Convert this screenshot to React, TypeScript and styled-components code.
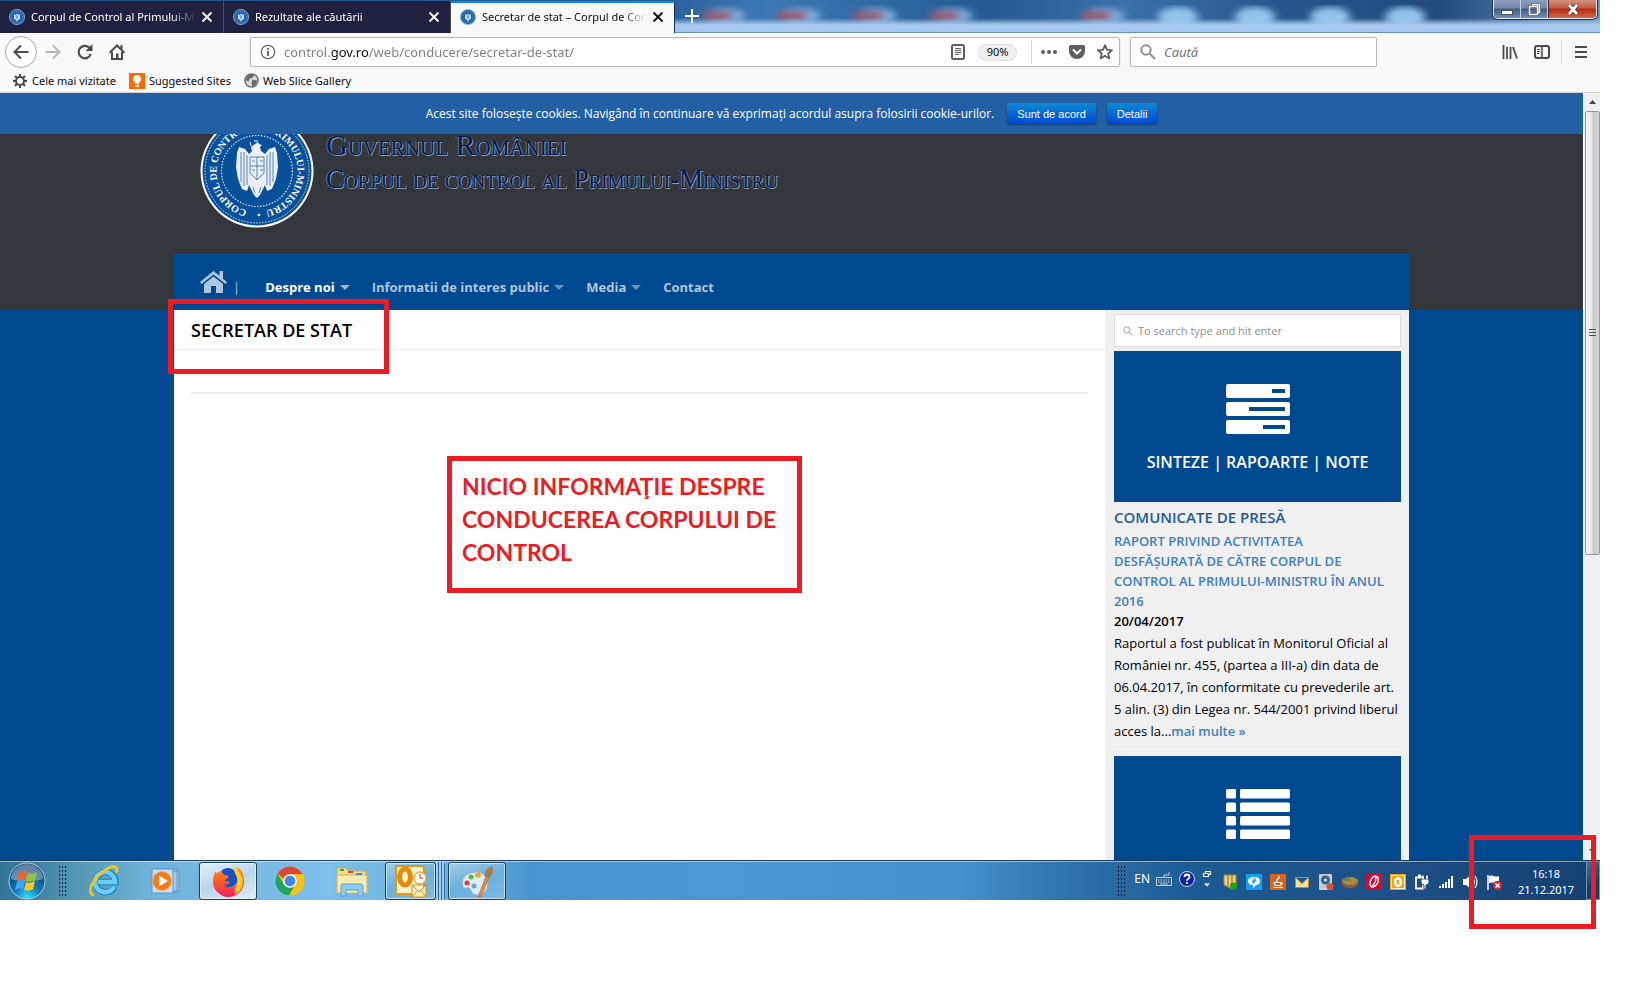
import React from "react";
import styled, { createGlobalStyle, css } from "styled-components";

const ui = `"Noto Sans", "Open Sans", sans-serif`;
const site = `"Open Sans", "Noto Sans", sans-serif`;
const navy = "#004990";
const red = "#ed1c24";

const GlobalStyle = createGlobalStyle`
  *, *::before, *::after { box-sizing: border-box; }
  body { margin: 0; background: #fff; font-family: ${site}; color: #000; }
  h1, h2, h3, p, ul { margin: 0; padding: 0; font-weight: inherit; }
  button, input { font: inherit; }
  svg { display: block; flex: none; }
`;

const Canvas = styled.div`
  height: 100vh;
  padding: 0 40px 108px 0;
`;

const Screen = styled.div`
  display: flex;
  flex-direction: column;
  height: 100%;
  min-width: 0;
`;

const PlainButton = styled.button`
  display: flex;
  align-items: center;
  justify-content: center;
  flex: none;
  padding: 0;
  border: 0;
  background: none;
  color: inherit;
`;

/* ---------- title bar ---------- */

const TitleBar = styled.header`
  position: relative;
  display: flex;
  align-items: flex-start;
  flex: none;
  height: 33px;
  overflow: hidden;
  background: #2c5f98;
`;

const Glass = styled.svg`
  position: absolute;
  inset: 0;
  width: 100%;
  height: 33px;
`;

const TabList = styled.div`
  position: relative;
  display: flex;
  height: 33px;
  padding-top: 1px;
`;

const Tab = styled.div<{ $active?: boolean; $wide?: boolean }>`
  display: flex;
  align-items: center;
  width: ${(p) => (p.$wide ? 227 : 224)}px;
  padding: 0 10px 0 9px;
  gap: 6px;
  font: 11px/16px ${ui};
  color: #fff;
  background: #20203f;
  border-right: 1px solid #4b4b68;
  ${(p) =>
    p.$active &&
    css`
      color: #0c0c0d;
      background: #f9f9fa;
      border-top: 2px solid #0a84ff;
      border-right: 1px solid #10305a;
      padding-bottom: 2px;
    `}
`;

const TabLabel = styled.span`
  flex: 1;
  min-width: 0;
  overflow: hidden;
  white-space: nowrap;
  mask-image: linear-gradient(to right, #000 calc(100% - 24px), transparent);
`;

const NewTab = styled(PlainButton)`
  position: relative;
  width: 34px;
  height: 32px;
  color: #fff;
`;

const WindowButtons = styled.div`
  position: relative;
  display: flex;
  margin: 0 3px 0 auto;
  height: 19px;
  border: 1px solid #e3ebf5;
  border-top: 0;
  border-radius: 0 0 5px 5px;
  overflow: hidden;
  box-shadow: 0 0 0 1px #20354f;
`;

const WindowButton = styled(PlainButton)<{ $close?: boolean }>`
  width: ${(p) => (p.$close ? 48 : 27)}px;
  border-left: ${(p) => (p.$close ? "1px solid #50181a" : "0")};
  border-right: ${(p) => (p.$close ? "0" : "1px solid #c6d3e4")};
  background: ${(p) =>
    p.$close
      ? "linear-gradient(#d4917f 0, #c25b47 45%, #b02a12 50%, #d26a4c 100%)"
      : "linear-gradient(#8c9fbb 0, #7288aa 45%, #3e5c85 50%, #7391b6 100%)"};
`;

/* ---------- browser toolbars ---------- */

const NavBar = styled.nav`
  display: flex;
  align-items: center;
  flex: none;
  height: 38px;
  padding: 0 3px 0 5px;
  background: #f9f9fa;
  color: #4a4a4f;
`;

const ToolButton = styled(PlainButton)<{ $round?: boolean }>`
  width: 32px;
  height: 32px;
  ${(p) =>
    p.$round &&
    css`
      border: 1px solid #a9a9ab;
      border-radius: 50%;
      background: #fff;
    `}
`;

const Field = styled.label<{ $search?: boolean }>`
  display: flex;
  align-items: center;
  flex: ${(p) => (p.$search ? "0 1 247px" : "1 1 0")};
  min-width: 0;
  height: 30px;
  margin-left: ${(p) => (p.$search ? 10 : 117)}px;
  padding: 0 0 0 9px;
  gap: 8px;
  border: 1px solid #b8b8ba;
  border-radius: 2px;
  background: #fff;
  box-shadow: 0 1px 3px rgba(0, 0, 0, 0.06);
`;

const Entry = styled.input<{ $url?: boolean }>`
  flex: 1;
  min-width: 0;
  padding: 0;
  border: 0;
  outline: 0;
  background: none;
  font: 13px/20px ${ui};
  &::placeholder {
    color: #757577;
    font-style: italic;
    opacity: 1;
  }
  ${(p) =>
    p.$url &&
    css`
      color: transparent;
      background: linear-gradient(to right, #7d7d80 0 46px, #0c0c0d 46px 84px, #7d7d80 84px);
      background-clip: text;
      -webkit-background-clip: text;
    `}
`;

const FieldTools = styled.div`
  display: flex;
  align-items: center;
  color: #5e5e62;
`;

const FieldButton = styled(PlainButton)`
  width: 28px;
  height: 28px;
`;

const Zoom = styled(PlainButton)`
  width: 39px;
  height: 17px;
  margin: 0 11px 0 6px;
  border: 1px solid #dededf;
  border-radius: 9px;
  background: #f0f0f1;
  font: 11px/14px ${ui};
  color: #0c0c0d;
`;

const Divider = styled.span`
  width: 1px;
  height: 24px;
  margin: 0 3px;
  background: #d7d7db;
`;

const NavEnd = styled.div`
  display: flex;
  align-items: center;
  margin-left: 117px;
`;

const Bookmarks = styled.div`
  display: flex;
  align-items: center;
  flex: none;
  height: 22px;
  padding: 0 12px 2px;
  gap: 13px;
  border-bottom: 1px solid #d5d5d8;
  background: #f9f9fa;
`;

const Bookmark = styled.a`
  display: flex;
  align-items: center;
  gap: 4px;
  font: 11px/16px ${ui};
  color: #0c0c0d;
  text-decoration: none;
  white-space: nowrap;
`;

/* ---------- web page ---------- */

const Viewport = styled.div`
  display: flex;
  flex: 1;
  min-height: 0;
`;

const WebPage = styled.div`
  display: flex;
  flex-direction: column;
  flex: 1;
  min-width: 0;
  background: ${navy};
`;

const CookieBar = styled.div`
  display: flex;
  align-items: center;
  justify-content: center;
  flex: none;
  height: 41px;
  background: #225fa3;
  font: 12px/18px ${site};
  color: #fff;
`;

const CookieText = styled.span`
  margin-right: 13px;
`;

const CookieButton = styled.button`
  height: 21px;
  margin-right: 11px;
  padding: 0 10px;
  border: 0;
  border-radius: 2px;
  background: linear-gradient(#0a8bd0, #0046d4);
  box-shadow: 0 1px 2px rgba(0, 0, 0, 0.35);
  font: 11px/20px "Liberation Sans", sans-serif;
  color: #fff;
  &:last-child {
    margin-right: 0;
  }
`;

const Masthead = styled.div`
  flex: none;
  background: #33363b;
`;

const Container = styled.div`
  width: 100%;
  max-width: 1235px;
  margin: 0 auto;
`;

const Brand = styled.div`
  display: flex;
  align-items: flex-start;
  height: 120px;
  padding-left: 26px;
  gap: 12px;
`;

const BrandText = styled.div`
  display: flex;
  flex-direction: column;
  padding-top: 1px;
  gap: 14px;
`;

const BrandLine = styled.span<{ $large?: boolean }>`
  font: ${(p) => (p.$large ? 30 : 27)}px/20px "Liberation Serif", serif;
  font-variant: small-caps;
  color: #051a4e;
  text-shadow: 1px 1px 0 #8a9bb8, -1px 0 0 #5f7294;
  white-space: nowrap;
`;

const SiteNav = styled.nav`
  display: flex;
  align-items: flex-end;
  height: 56px;
  padding: 0 26px 12px;
  border-top: 1px solid #0d5199;
  background: ${navy};
  font: 700 13px/22px ${site};
  color: #b0c6dd;
`;

const NavLink = styled.a<{ $current?: boolean }>`
  display: flex;
  align-items: center;
  gap: 5px;
  margin-right: 22px;
  color: ${(p) => (p.$current ? "#fff" : "inherit")};
  text-decoration: none;
`;

const HomeLink = styled.a`
  display: flex;
  align-items: flex-end;
  gap: 6px;
  margin-right: 25px;
  color: inherit;
  font-weight: 400;
  text-decoration: none;
  svg {
    margin-bottom: 4px;
  }
`;

const Caret = styled.span`
  border: 5px solid transparent;
  border-top-color: currentColor;
  border-bottom: 0;
  opacity: 0.6;
`;

const Body = styled(Container)`
  display: flex;
  flex: 1;
  min-height: 0;
  background: #fff;
`;

const Main = styled.main`
  position: relative;
  flex: 1;
  min-width: 0;
`;

const TitleRow = styled.div`
  position: relative;
  height: 40px;
  padding: 0 17px;
  border-bottom: 1px solid #eee;
`;

const PageTitle = styled.h1`
  font: 600 18px/40px ${site};
`;

const Rule = styled.hr`
  height: 2px;
  margin: 42px 17px 0;
  border: 0;
  background: #eee;
`;

const Frame = styled.div`
  position: absolute;
  z-index: 3;
  border: 5px solid ${red};
  pointer-events: none;
`;

const TitleFrame = styled(Frame)`
  left: -6px;
  top: -11px;
  width: 221px;
  height: 75px;
`;

const ClockFrame = styled(Frame)`
  right: 4px;
  top: -26px;
  width: 127px;
  height: 94px;
`;

const Note = styled(Frame)`
  left: 273px;
  top: 146px;
  width: 355px;
  height: 137px;
  padding: 9px 10px;
  font: 700 23px/33px Lato, sans-serif;
  color: ${red};
  white-space: nowrap;
`;

const Sidebar = styled.aside`
  flex: none;
  width: 304px;
  padding: 4px 8px 0 9px;
  overflow: hidden;
  background: #f0f0f0;
`;

const SideSearch = styled.label`
  display: flex;
  align-items: center;
  gap: 5px;
  height: 33px;
  padding: 0 8px;
  border: 1px solid #ddd;
  background: #fff;
`;

const SideEntry = styled.input`
  flex: 1;
  min-width: 0;
  padding: 0;
  border: 0;
  outline: 0;
  font: 11px/18px ${site};
  &::placeholder {
    color: #8e8e8e;
    opacity: 1;
  }
`;

const Tile = styled.a`
  display: flex;
  flex-direction: column;
  align-items: center;
  height: 151px;
  margin-top: 4px;
  padding-top: 33px;
  gap: 16px;
  background: ${navy};
  font: 600 16px/24px ${site};
  color: #fff;
  text-decoration: none;
  white-space: nowrap;
`;

const News = styled.article`
  padding-top: 4px;
  padding-bottom: 9px;
  border-bottom: 1px solid #ececec;
  white-space: nowrap;
`;

const NewsHeading = styled.h2`
  margin-bottom: 3px;
  font: 600 15px/22px ${site};
  color: #1f5a99;
`;

const NewsTitle = styled.h3`
  font: 600 13px/20px ${site};
  color: #3d7fbc;
`;

const NewsDate = styled.p`
  font: 600 13px/20px ${site};
`;

const NewsText = styled.p`
  padding-top: 1px;
  font: 13px/22px ${site};
`;

const PlainLink = styled.a`
  color: inherit;
  text-decoration: none;
`;

const MoreLink = styled.a`
  font-weight: 600;
  color: #3d7fbc;
  text-decoration: none;
`;

const ScrollTrack = styled.div`
  display: flex;
  flex-direction: column;
  align-items: center;
  justify-content: space-between;
  width: 17px;
  border-left: 1px solid #fff;
  background: #f0f0f0;
`;

const ScrollThumb = styled.div`
  display: flex;
  align-items: center;
  justify-content: center;
  width: 15px;
  height: 444px;
  margin-bottom: auto;
  border: 1px solid #979797;
  border-radius: 2px;
  background: linear-gradient(to right, #f5f5f5, #e6e6e8 45%, #c8c8cb 55%, #d6d6d9);
`;

const ScrollArrow = styled(PlainButton)`
  width: 16px;
  height: 18px;
`;

/* ---------- taskbar ---------- */

const Taskbar = styled.footer`
  position: relative;
  display: flex;
  flex: none;
  height: 40px;
  border-top: 1px solid #1d3c55;
  box-shadow: inset 0 1px 0 rgba(255, 255, 255, 0.5);
  background: linear-gradient(
    to right,
    #2f7396 0,
    #5a9cb8 90px,
    #6fb3dd 150px,
    #7dbfea 330px,
    #66aee0 480px,
    #4a93cc 530px,
    #4d97d0 45%,
    #4790ca 60%,
    #2d72a8 67%,
    #1b5a92 75%,
    #1d4f85 88%,
    #163e70 100%
  );
`;

const StartButton = styled(PlainButton)`
  width: 54px;
`;

const Grip = styled.span`
  width: 9px;
  height: 31px;
  margin: 4px 0 0 4px;
  background: radial-gradient(circle, #0d2438 0 1px, transparent 1px) 0 0 / 3px 4px;
`;

const Launchers = styled.div`
  display: flex;
  align-items: center;
  margin-left: 8px;
`;

const TaskButton = styled(PlainButton)<{ $state?: "active" | "open"; $narrow?: boolean }>`
  width: ${(p) => (p.$narrow ? 51 : 58)}px;
  height: 38px;
  margin-right: 4px;
  border-radius: 3px;
  ${(p) =>
    p.$state &&
    css`
      border: 1px solid #17405f;
      box-shadow: inset 0 0 0 1px rgba(255, 255, 255, 0.6);
      background: ${p.$state === "active"
        ? "linear-gradient(160deg, #e6eff6, #b9d6ec 50%, #dcecf8)"
        : "linear-gradient(160deg, #a6cde8, #6aafdd 50%, #7dbbe4)"};
    `}
`;

const Stack = styled.span`
  width: 9px;
  height: 38px;
  margin-left: -4px;
  margin-right: 3px;
  border-radius: 0 3px 3px 0;
  background: repeating-linear-gradient(to right, #9fcdee 0 2px, #2d6b98 2px 3px);
`;

const Tray = styled.div`
  display: flex;
  align-items: center;
  margin-left: auto;
  font: 12px/16px ${ui};
  color: #fff;
`;

const TrayGrip = styled(Grip)`
  margin: 0 8px 0 0;
`;

const Language = styled.span`
  padding-bottom: 4px;
`;

const TrayTools = styled.div`
  display: flex;
  align-items: center;
  gap: 7px;
  margin: 0 10px 4px 6px;
`;

const TrayIcons = styled.div`
  display: flex;
  align-items: center;
  gap: 8px;
  padding-top: 2px;
`;

const Clock = styled.time`
  width: 84px;
  padding: 2px 0 0 4px;
  font: 11px/16px ${ui};
  text-align: center;
`;

const ShowDesktop = styled(PlainButton)`
  width: 14px;
  height: 39px;
  border: 1px solid #7391b4;
  background: linear-gradient(135deg, #4c6f98, #173a68 60%);
`;

/* ---------- drawings ---------- */

const Favicon = () => (
  <svg width="16" height="16" viewBox="0 0 16 16">
    <circle cx="8" cy="8" r="7.6" fill="#2a69ad" stroke="#8fb4da" strokeWidth=".8" />
    <circle cx="8" cy="8" r="5.4" fill="#1f5ca4" stroke="#79a4d0" strokeWidth=".6" strokeDasharray="1 1" />
    <path d="M5 5l2 1 1-2 1 2 2-1v5l-2 1-1 2-1-2-2-1z" fill="#c3d6ea" />
    <path d="M7 6.500h2v3h-2z" fill="#6f9bca" />
  </svg>
);

const CloseX = () => (
  <svg width="12" height="12" viewBox="0 0 12 12" fill="none" stroke="currentColor" strokeWidth="1.8">
    <path d="M1.500 1.500l9 9M10.500 1.500l-9 9" />
  </svg>
);

const Seal = () => (
  <svg width="114" height="96" viewBox="0 20 114 96">
    <defs>
      <path id="ring" d="M57 97.500a40.500 40.500 0 1 1 .1 0" />
    </defs>
    <circle cx="57" cy="57" r="56.500" fill="#fff" />
    <circle cx="57" cy="57" r="54.500" fill="#08509a" />
    <circle cx="57" cy="57" r="52" fill="none" stroke="#dce8f4" strokeWidth="1" strokeDasharray="1.500 1.500" />
    <circle cx="57" cy="57" r="35.500" fill="none" stroke="#dce8f4" strokeWidth="1.200" strokeDasharray="1.500 1.500" />
    <text fontFamily="Liberation Serif, serif" fontWeight="700" fontSize="10" fill="#fff">
      <textPath href="#ring" startOffset="4%">CORPUL DE CONTROL AL PRIMULUI-MINISTRU</textPath>
    </text>
    <circle cx="59" cy="101" r="1.300" fill="#fff" />
    <g fill="#e9f0f7">
      <path d="M55 30l3-2 1 2 3 1-2 2 1 4 4 3 4-5 6-2 2 6 1 14-2 12-4 10-5 2-2-6-3 6-2 4-3 3-3-3-2-4-3-6-2 6-5-2-4-10-2-12 1-14 2-6 6 2 4 5 3-3-1-4z" />
      <path d="M50 28l1 4M54 27h4" stroke="#e9f0f7" />
    </g>
    <g stroke="#2e6aa8" strokeWidth=".8" fill="none">
      <path d="M41 38v30M44 38v34M47 41v30M73 38v30M70 38v34M67 41v30M53 73l2 6M61 73l-2 6" />
      <path d="M50 43h14v16l-7 7-7-7zM57 43v22M50 52h14M52 47h3M60 47h3M52 56h3M60 56h3" />
    </g>
  </svg>
);

const ServerIcon = () => (
  <svg width="64" height="50" viewBox="0 0 64 50">
    <g fill="#fff">
      <rect width="64" height="14" rx="2" />
      <rect y="18" width="64" height="14" rx="2" />
      <rect y="36" width="64" height="14" rx="2" />
    </g>
    <g fill={navy}>
      <rect x="46" y="5" width="13" height="4" />
      <rect x="23" y="23" width="36" height="4" />
      <rect x="37" y="41" width="22" height="4" />
    </g>
  </svg>
);

const ListIcon = () => (
  <svg width="64" height="50" viewBox="0 0 64 50" fill="#fff">
    {[0, 13.500, 27, 40.500].map((y) => (
      <g key={y}>
        <rect y={y} width="10" height="9.500" rx="1.500" />
        <rect x="14" y={y} width="50" height="9.500" rx="1.500" />
      </g>
    ))}
  </svg>
);

const GlassBackdrop = () => (
  <Glass aria-hidden="true">
    <defs>
      <linearGradient id="sky">
        <stop offset="0" stopColor="#1d4f86" />
        <stop offset=".42" stopColor="#2a629d" />
        <stop offset=".48" stopColor="#3c78b3" />
        <stop offset=".62" stopColor="#235a92" />
        <stop offset=".7" stopColor="#3a71ab" />
        <stop offset=".8" stopColor="#27568c" />
        <stop offset=".9" stopColor="#234a7c" />
        <stop offset="1" stopColor="#6f96bf" />
      </linearGradient>
      <linearGradient id="band" x2="0" y2="1">
        <stop offset="0" stopColor="#a9cbee" stopOpacity="0" />
        <stop offset=".5" stopColor="#a9cbee" />
        <stop offset="1" stopColor="#a3c7ee" />
      </linearGradient>
      <filter id="soft">
        <feGaussianBlur stdDeviation="4 3" />
      </filter>
    </defs>
    <rect width="100%" height="33" fill="url(#sky)" />
    <g filter="url(#soft)">
      {[717, 792, 868, 944, 1096].map((x) => (
        <g key={x}>
          <ellipse cx={x + 8} cy="16" rx="20" ry="8" fill="#7fb2de" />
          <rect x={x - 14} y="11" width="29" height="10" fill="#96586f" />
        </g>
      ))}
      {[1178, 1255, 1330, 1405].map((x) => (
        <ellipse key={x} cx={x} cy="17" rx="20" ry="10" fill="#93c6ef" />
      ))}
    </g>
    <rect y="18" width="100%" height="14" fill="url(#band)" />
    <rect y="32" width="100%" height="1" fill="#6b8fb8" />
  </Glass>
);

const Start = () => (
  <svg width="38" height="38" viewBox="0 0 38 38">
    <defs>
      <radialGradient id="orb" cx=".5" cy=".95" r=".9">
        <stop offset="0" stopColor="#2ee0ff" />
        <stop offset=".4" stopColor="#1279b8" />
        <stop offset="1" stopColor="#0c3a66" />
      </radialGradient>
    </defs>
    <circle cx="19" cy="19" r="18" fill="url(#orb)" stroke="#a9d3e8" strokeWidth="1" />
    <path d="M3 17a16 15 0 0 1 32 0q-16 5-32 0z" fill="#fff" opacity=".35" />
    <path d="M11 11q4-3 8-1l-2 8q-4-2-8 1z" fill="#f0622c" />
    <path d="M20 11q4 2 9-1l-2 8q-4 3-9 1z" fill="#8cc63f" />
    <path d="M9 20q4-3 8-1l-2 8q-4-2-8 1z" fill="#3fa9f5" />
    <path d="M18 20q4 2 9-1l-2 8q-4 3-9 1z" fill="#fcc721" />
  </svg>
);

const Explorer = () => (
  <svg width="32" height="32" viewBox="0 0 32 32" fill="none">
    <path d="M26.500 21.500a10 10 0 1 1 1-4.500H10" stroke="#1c82c4" strokeWidth="6.500" />
    <path d="M26 21.500a10 10 0 1 1 1-4.500H10" stroke="#6fcdf5" strokeWidth="4.500" />
    <path d="M6 30C-3 28 6 11 19 4c7-4 12-3 9 4" stroke="#f5c518" strokeWidth="2.800" />
  </svg>
);

const Player = () => (
  <svg width="30" height="28" viewBox="0 0 30 28">
    <path d="M6 2h20v22H6zM10 4h18v21H10z" fill="#a3cbe8" stroke="#5b97c4" />
    <rect x="1" y="2" width="21" height="24" fill="#c5dff2" stroke="#5b97c4" />
    <circle cx="11" cy="14" r="9.500" fill="#f07d1a" stroke="#f7b06d" />
    <path d="M8 8.500v11l9-5.500z" fill="#fff" />
  </svg>
);

const Firefox = () => (
  <svg width="32" height="32" viewBox="0 0 32 32">
    <defs>
      <linearGradient id="fox" x2="0" y2="1">
        <stop offset="0" stopColor="#ff9a1a" />
        <stop offset=".5" stopColor="#ff5a24" />
        <stop offset="1" stopColor="#f01e62" />
      </linearGradient>
    </defs>
    <circle cx="16" cy="13" r="10" fill="#1750c8" />
    <path d="M4 6q0 3 1 2 2-2 5-2 0 3 3 4 3 0 4 2l-4 3q0 2 3 1l2 1q-2 4-6 2 3 5 8 3 5-1 5-6 1-5-1-8 1 0 2 2 0-5-1-9 4 4 6 8 1 3 1 7a15 15 0 0 1-31 1Q1 10 4 6z" fill="url(#fox)" />
    <path d="M21 1q6 4 9 11 3 11-6 17-3-2 0-7 3-6 0-12-3-5-3-9z" fill="#ffcf22" />
  </svg>
);

const Chrome = () => (
  <svg width="30" height="30" viewBox="0 0 30 30">
    <circle cx="15" cy="15" r="14.500" fill="#fbc116" />
    <path d="M2.500 7.700A14.500 14.500 0 0 1 27.600 8H15a7 7 0 0 0-6.500 4.500z" fill="#db4437" />
    <path d="M2.400 7.800A14.500 14.500 0 0 0 14 29.500l6-10.500a7 7 0 0 1-11-.5z" fill="#1da462" />
    <circle cx="15" cy="15" r="6.800" fill="#fff" />
    <circle cx="15" cy="15" r="5.400" fill="#4285f4" />
  </svg>
);

const Folders = () => (
  <svg width="32" height="32" viewBox="0 0 32 32">
    <path d="M1 3h9l2 3h18v22H1z" fill="#f0dc8c" stroke="#c9ab4a" />
    <path d="M1 10h30v18H1z" fill="#f8ebae" stroke="#d3b757" />
    <path d="M4 4h4v2H4z" fill="#2fae4a" />
    <path d="M12 6h5v2h-5z" fill="#d84a2f" />
    <path d="M20 8h6v2h-6z" fill="#3b8fd6" />
    <path d="M5 31V21q0-2 2-2h17q3 0 3 2v10h-5v-6H10v6z" fill="#8fcdf0" stroke="#5aa4d2" />
  </svg>
);

const Outlook = () => (
  <svg width="32" height="34" viewBox="0 0 32 34">
    <path d="M1 2h25q3 0 3 3v25H1z" fill="#fff3cf" stroke="#e09a16" strokeWidth="2" />
    <ellipse cx="10" cy="13" rx="5.500" ry="8" fill="none" stroke="#e58a0c" strokeWidth="5" />
    <circle cx="25" cy="14" r="6" fill="#fff" stroke="#e3b352" strokeWidth="1.500" />
    <path d="M25 10v4h3" stroke="#c0392b" fill="none" />
    <path d="M17 21h14v12H17zM17 21l7 7 7-7M17 33l5-6M31 33l-5-6" fill="#fdebb0" stroke="#c9952b" />
  </svg>
);

const Paint = () => (
  <svg width="34" height="34" viewBox="0 0 34 34">
    <path d="M14 8C4 9 0 17 3 23c2 3 5-1 7 2s2 6 7 6c8 0 13-7 10-15-2-6-7-9-13-8z" fill="#dcecf9" stroke="#7fb2d9" />
    <circle cx="7" cy="19" r="2.500" fill="#e03c31" />
    <circle cx="11" cy="13" r="2.500" fill="#58b947" />
    <circle cx="18" cy="11" r="2.800" fill="#f5a623" />
    <circle cx="14" cy="22" r="2.500" fill="#5fa9dc" />
    <path d="M18 33l8-21 3 1-8 20z" fill="#e78a3c" stroke="#b9612a" strokeWidth=".6" />
    <path d="M25 12q-1-7 7-10 3 7-3 12z" fill="#a67c52" />
  </svg>
);

const TrayIcon = ({ children }: { children: React.ReactNode }) => (
  <svg width="16" height="16" viewBox="0 0 16 16" fill="none">
    {children}
  </svg>
);

const Magnifier = ({ size, color }: { size: number; color: string }) => (
  <svg width={size} height={size} viewBox="0 0 16 16" fill="none" stroke={color} strokeWidth="2">
    <circle cx="6" cy="6" r="4.700" />
    <path d="M9.500 9.500l5.500 5.500" />
  </svg>
);

/* ---------- page sections ---------- */

const tabs = [
  { label: "Corpul de Control al Primului-Ministru" },
  { label: "Rezultate ale căutării", wide: true },
  { label: "Secretar de stat – Corpul de Control", active: true },
];

const BrowserTop = () => (
  <>
    <TitleBar>
      <GlassBackdrop />
      <TabList>
        {tabs.map((t) => (
          <Tab key={t.label} $active={t.active} $wide={t.wide}>
            <Favicon />
            <TabLabel>{t.label}</TabLabel>
            <PlainButton aria-label="Închide fila">
              <CloseX />
            </PlainButton>
          </Tab>
        ))}
      </TabList>
      <NewTab aria-label="Filă nouă">
        <svg width="14" height="14" viewBox="0 0 14 14" stroke="currentColor" strokeWidth="2">
          <path d="M7 0v14M0 7h14" />
        </svg>
      </NewTab>
      <WindowButtons>
        <WindowButton aria-label="Minimizează">
          <svg width="12" height="12" viewBox="0 0 12 12">
            <rect x=".5" y="7.500" width="11" height="4" fill="#fff" stroke="#44546c" />
          </svg>
        </WindowButton>
        <WindowButton aria-label="Restaurează">
          <svg width="13" height="13" viewBox="0 0 13 13" fill="none">
            <path d="M3.500 1.500h8v8h-2M1.500 3.500h8v8h-8z" stroke="#44546c" strokeWidth="3" />
            <path d="M4 1.500h7.500v8h-1.500M1.500 3.500h8v8h-8z" stroke="#fff" strokeWidth="1.500" />
          </svg>
        </WindowButton>
        <WindowButton $close aria-label="Închide">
          <svg width="12" height="11" viewBox="0 0 12 11">
            <path d="M2 1l8 9M10 1l-8 9" stroke="#5b2a2a" strokeWidth="4.500" />
            <path d="M2 1l8 9M10 1l-8 9" stroke="#fff" strokeWidth="2.800" />
          </svg>
        </WindowButton>
      </WindowButtons>
    </TitleBar>

    <NavBar>
      <ToolButton $round aria-label="Înapoi">
        <svg width="16" height="16" viewBox="0 0 16 16" fill="none" stroke="currentColor" strokeWidth="2">
          <path d="M15.500 8H1.500M8 1.500L1.500 8 8 14.500" />
        </svg>
      </ToolButton>
      <ToolButton aria-label="Înainte">
        <svg width="16" height="16" viewBox="0 0 16 16" fill="none" stroke="#b4b4b6" strokeWidth="2">
          <path d="M.5 8h14M8 1.500L14.500 8 8 14.500" />
        </svg>
      </ToolButton>
      <ToolButton aria-label="Reîncarcă">
        <svg width="16" height="16" viewBox="0 0 16 16" fill="none" stroke="currentColor" strokeWidth="2.200">
          <path d="M13.800 10A6.200 6.200 0 1 1 13 4.500" />
          <path d="M15.500 0v7h-7z" fill="currentColor" stroke="none" />
        </svg>
      </ToolButton>
      <ToolButton aria-label="Acasă">
        <svg width="16" height="16" viewBox="0 0 16 16" fill="none" stroke="currentColor" strokeWidth="2">
          <path d="M.7 8.700L8 1.500l7.300 7.200M3 8v7h10V8M12.500 1v4" />
          <path d="M7 9.500h2.500V14H7z" fill="currentColor" stroke="none" />
        </svg>
      </ToolButton>
      <Field>
        <svg width="16" height="16" viewBox="0 0 16 16" fill="none" stroke="#6a6a6d" strokeWidth="1.200">
          <circle cx="8" cy="8" r="6.700" />
          <path d="M8 7v5M8 4v1.800" strokeWidth="2" />
        </svg>
        <Entry $url aria-label="Adresă" defaultValue="control.gov.ro/web/conducere/secretar-de-stat/" />
        <FieldTools>
          <FieldButton aria-label="Mod lectură">
            <svg width="14" height="16" viewBox="0 0 14 16" fill="none" stroke="currentColor">
              <rect x="1" y="1" width="12" height="14" rx="1.500" strokeWidth="2" />
              <path d="M4 4.500h6M4 6.500h6M4 8.500h6M4 10.500h4" />
            </svg>
          </FieldButton>
          <Zoom>90%</Zoom>
          <Divider />
          <FieldButton aria-label="Acțiuni">
            <svg width="16" height="4" viewBox="0 0 16 4" fill="currentColor">
              <circle cx="2" cy="2" r="2" />
              <circle cx="8" cy="2" r="2" />
              <circle cx="14" cy="2" r="2" />
            </svg>
          </FieldButton>
          <FieldButton aria-label="Pocket">
            <svg width="16" height="14" viewBox="0 0 16 14">
              <path d="M1.500 0h13Q16 0 16 1.500V6A8 8 0 0 1 0 6V1.500Q0 0 1.500 0z" fill="currentColor" />
              <path d="M4 4.500l4 4 4-4" fill="none" stroke="#fff" strokeWidth="2" />
            </svg>
          </FieldButton>
          <FieldButton aria-label="Marcaj">
            <svg width="16" height="16" viewBox="0 0 16 16" fill="none" stroke="currentColor" strokeWidth="1.800" strokeLinejoin="round">
              <path d="M8 1.200l2 4.600 5 .4-3.800 3.300 1.200 4.900L8 11.800l-4.400 2.600 1.200-4.900L1 6.200l5-.4z" />
            </svg>
          </FieldButton>
        </FieldTools>
      </Field>
      <Field $search>
        <Magnifier size={16} color="#939395" />
        <Entry aria-label="Caută" placeholder="Caută" />
      </Field>
      <NavEnd>
        <ToolButton aria-label="Bibliotecă">
          <svg width="16" height="14" viewBox="0 0 16 14" fill="none" stroke="currentColor" strokeWidth="1.800">
            <path d="M1.500 0v14M5 2v12M8.500 2v12M11 2l4 11.500" />
          </svg>
        </ToolButton>
        <ToolButton aria-label="Bară laterală">
          <svg width="16" height="14" viewBox="0 0 16 14" fill="none" stroke="currentColor">
            <rect x="1" y="1" width="14" height="12" rx="2" strokeWidth="2" />
            <path d="M8 1v12" strokeWidth="1.500" />
            <path d="M3 4.500h3M3 6.500h3M3 8.500h2" />
          </svg>
        </ToolButton>
        <Divider />
        <ToolButton aria-label="Meniu">
          <svg width="12" height="12" viewBox="0 0 12 12" stroke="currentColor" strokeWidth="2">
            <path d="M0 1h12M0 6h12M0 11h12" />
          </svg>
        </ToolButton>
      </NavEnd>
    </NavBar>

    <Bookmarks>
      <Bookmark href="#">
        <svg width="16" height="16" viewBox="0 0 16 16" fill="none" stroke="#4a4a4f">
          <circle cx="8" cy="8" r="4" strokeWidth="2" />
          <path d="M8 1v3M8 12v3M1 8h3M12 8h3M3 3l2 2M11 11l2 2M13 3l-2 2M5 11l-2 2" strokeWidth="2" />
        </svg>
        Cele mai vizitate
      </Bookmark>
      <Bookmark href="#">
        <svg width="16" height="16" viewBox="0 0 16 16">
          <rect width="16" height="16" fill="#ff6a00" />
          <path d="M8 2a4 4 0 0 1 2 7.500v1.500H6V9.500A4 4 0 0 1 8 2zM6 12h4v2H6z" fill="#fff" />
        </svg>
        Suggested Sites
      </Bookmark>
      <Bookmark href="#">
        <svg width="15" height="15" viewBox="0 0 16 16">
          <circle cx="8" cy="8" r="7" fill="#dcdcdd" stroke="#6b6b6e" strokeWidth="1.500" />
          <path d="M3 4q4-4 8-2l-2 3-3 1-1 3-3-1zM9 7l5 1-1 4-4 3-1-4z" fill="#6b6b6e" />
        </svg>
        Web Slice Gallery
      </Bookmark>
    </Bookmarks>
  </>
);

const Page = () => (
  <Viewport>
    <WebPage>
      <CookieBar>
        <CookieText>
          Acest site folosește cookies. Navigând în continuare vă exprimați acordul asupra folosirii cookie-urilor.
        </CookieText>
        <CookieButton>Sunt de acord</CookieButton>
        <CookieButton>Detalii</CookieButton>
      </CookieBar>
      <Masthead>
        <Container>
          <Brand>
            <Seal />
            <BrandText>
              <BrandLine $large>Guvernul României</BrandLine>
              <BrandLine>Corpul de control al Primului-Ministru</BrandLine>
            </BrandText>
          </Brand>
          <SiteNav>
            <HomeLink href="#" aria-label="Acasă">
              <svg width="27" height="25" viewBox="0 0 27 25" fill="currentColor">
                <path d="M13.500 2L0 13l1.500 2 12-9.500 12 9.500 1.500-2-4-3.300V2h-3.500v4.800z" />
                <path d="M13.500 7.500L4 15v9h7v-7h5v7h7v-9z" />
              </svg>
              |
            </HomeLink>
            <NavLink href="#" $current>
              Despre noi <Caret />
            </NavLink>
            <NavLink href="#">
              Informatii de interes public <Caret />
            </NavLink>
            <NavLink href="#">
              Media <Caret />
            </NavLink>
            <NavLink href="#">Contact</NavLink>
          </SiteNav>
        </Container>
      </Masthead>
      <Body>
        <Main>
          <TitleRow>
            <PageTitle>SECRETAR DE STAT</PageTitle>
            <TitleFrame />
          </TitleRow>
          <Rule />
          <Note>
            NICIO INFORMAŢIE DESPRE
            <br />
            CONDUCEREA CORPULUI DE
            <br />
            CONTROL
          </Note>
        </Main>
        <Sidebar>
          <SideSearch>
            <Magnifier size={10} color="#bbb" />
            <SideEntry aria-label="Search" placeholder="To search type and hit enter" />
          </SideSearch>
          <Tile href="#">
            <ServerIcon />
            SINTEZE | RAPOARTE | NOTE
          </Tile>
          <News>
            <NewsHeading>COMUNICATE DE PRESĂ</NewsHeading>
            <NewsTitle>
              <PlainLink href="#">
                RAPORT PRIVIND ACTIVITATEA
                <br />
                DESFĂȘURATĂ DE CĂTRE CORPUL DE
                <br />
                CONTROL AL PRIMULUI-MINISTRU ÎN ANUL
                <br />
                2016
              </PlainLink>
            </NewsTitle>
            <NewsDate>20/04/2017</NewsDate>
            <NewsText>
              Raportul a fost publicat în Monitorul Oficial al
              <br />
              României nr. 455, (partea a III-a) din data de
              <br />
              06.04.2017, în conformitate cu prevederile art.
              <br />
              5 alin. (3) din Legea nr. 544/2001 privind liberul
              <br />
              acces la...<MoreLink href="#">mai multe »</MoreLink>
            </NewsText>
          </News>
          <Tile href="#" aria-label="Listă">
            <ListIcon />
          </Tile>
        </Sidebar>
      </Body>
    </WebPage>
    <ScrollTrack>
      <ScrollArrow aria-label="Sus">
        <svg width="7" height="4" viewBox="0 0 7 4">
          <path d="M3.500 0L7 4H0z" fill="#444" />
        </svg>
      </ScrollArrow>
      <ScrollThumb>
        <svg width="7" height="8" viewBox="0 0 7 8" stroke="#555">
          <path d="M0 .5h7M0 3.500h7M0 6.500h7" />
        </svg>
      </ScrollThumb>
      <ScrollArrow aria-label="Jos">
        <svg width="7" height="4" viewBox="0 0 7 4">
          <path d="M0 0h7L3.500 4z" fill="#444" />
        </svg>
      </ScrollArrow>
    </ScrollTrack>
  </Viewport>
);

const Desktop = () => (
  <Taskbar>
    <StartButton aria-label="Start">
      <Start />
    </StartButton>
    <Grip />
    <Launchers>
      <TaskButton aria-label="Internet Explorer">
        <Explorer />
      </TaskButton>
      <TaskButton aria-label="Media Player">
        <Player />
      </TaskButton>
      <TaskButton $state="active" aria-label="Firefox">
        <Firefox />
      </TaskButton>
      <TaskButton aria-label="Chrome">
        <Chrome />
      </TaskButton>
      <TaskButton aria-label="Explorer">
        <Folders />
      </TaskButton>
      <TaskButton $state="open" $narrow aria-label="Outlook">
        <Outlook />
      </TaskButton>
      <Stack />
      <TaskButton $state="open" aria-label="Paint">
        <Paint />
      </TaskButton>
    </Launchers>
    <Tray>
      <TrayGrip />
      <Language>EN</Language>
      <TrayTools>
        <svg width="16" height="16" viewBox="0 0 16 16" fill="none" stroke="#c9ccd0">
          <path d="M.5 6.500h15v8H.5zM4 13h8M8 6V4h5V1" />
          <path d="M2 9h12M2 11h12" strokeDasharray="1.500 1" />
        </svg>
        <svg width="16" height="16" viewBox="0 0 16 16">
          <circle cx="8" cy="8" r="7.500" fill="#0b1fa8" stroke="#cfd8ee" />
          <path d="M5.500 6q0-2.500 2.500-2.500T10.500 6q0 1.200-1.500 2-1 .6-1 1.800M8 11v2" fill="none" stroke="#fff" strokeWidth="1.800" />
        </svg>
        <svg width="10" height="18" viewBox="0 0 10 18" fill="none" stroke="#fff">
          <path d="M3.500 3V1.500h5v3H7M1.500 3.500h5v3h-5z" strokeWidth="1.200" />
          <path d="M2 13.500h6L5 16.500z" fill="#fff" stroke="none" />
        </svg>
      </TrayTools>
      <TrayIcons>
        <TrayIcon>
          <path d="M2 1h4v12L2 11zM6 1h4v14l-4-2zM10 1h4v12l-4 2z" fill="#edd184" stroke="#a88532" />
          <circle cx="11.500" cy="12" r="3.500" fill="#16a516" />
        </TrayIcon>
        <TrayIcon>
          <rect width="16" height="16" fill="#12a0f5" />
          <path d="M8 3c3.500 0 6 1.500 6 4s-2 4-4 4l-3 3v-3c-3 0-5-1.500-5-4s2.500-4 6-4z" fill="#fff" />
          <path d="M9.500 4.500L7 7h2L7 9.500" stroke="#12a0f5" strokeWidth="1.500" />
        </TrayIcon>
        <TrayIcon>
          <rect width="16" height="16" rx="1" fill="#d8641a" />
          <path d="M4 8.500h7v3H5zM11 9.500h2M3 13.500h10M8 2q3 1 0 3t0 2.500" stroke="#fff" strokeWidth="1.200" />
        </TrayIcon>
        <TrayIcon>
          <path d="M1.500 3.500h13v10h-13zl6.500 6 6.500-6" fill="#f8e29b" stroke="#b38d35" />
        </TrayIcon>
        <TrayIcon>
          <rect x="1" width="13" height="16" rx="1" fill="#c6cbd3" />
          <circle cx="7.500" cy="6" r="4.500" fill="#34618f" />
          <circle cx="7.500" cy="6" r="1.500" fill="#dde6ee" />
          <circle cx="12" cy="12.500" r="3.500" fill="#e3502f" />
        </TrayIcon>
        <TrayIcon>
          <path d="M0 7v3q2 4 8 4t8-4V7z" fill="#8a5a43" />
          <ellipse cx="8" cy="7" rx="8" ry="4" fill="#b08a35" />
          <path d="M0 7a8 4 0 0 1 8-4v4z" fill="#6f7f5a" />
        </TrayIcon>
        <TrayIcon>
          <rect width="16" height="16" rx="1" fill="#cf0a35" />
          <path d="M9.500 2q4 1.500 2.500 6t-6 5q-3-1.500-1.500-6t5-5q1.500 5-3 10" stroke="#fff" strokeWidth="1.400" />
        </TrayIcon>
        <TrayIcon>
          <rect width="16" height="16" fill="#eca51b" />
          <rect x="1.500" y="1.500" width="13" height="13" stroke="#fff0c0" />
          <ellipse cx="8" cy="8" rx="2.800" ry="3.800" stroke="#fff" strokeWidth="2.500" />
        </TrayIcon>
        <TrayIcon>
          <path d="M4 1.500h3M2 3.500h7v11H2z" stroke="#fff" strokeWidth="1.800" />
          <path d="M7 5h8v3q0 3-3 3v4h-2v-4q-3 0-3-3z" fill="#fff" stroke="#1c4c80" />
          <path d="M9 1.500v3.500M13 1.500v3.500" stroke="#fff" strokeWidth="1.500" />
        </TrayIcon>
        <TrayIcon>
          <path d="M1 12h2v2H1zM4 10h2v4H4zM7 8h2v6H7zM10 5h2v9h-2zM13 2h2v12h-2z" fill="#fff" />
        </TrayIcon>
        <TrayIcon>
          <path d="M1 5h3l5-4v14l-5-4H1z" fill="#fff" />
          <path d="M11 4q3 4 0 8M13 2q4 6 0 12" stroke="#fff" strokeWidth="1.200" />
        </TrayIcon>
        <TrayIcon>
          <path d="M2 1v15" stroke="#fff" strokeWidth="1.500" />
          <path d="M3 2q3-1 5 0t5 0v7q-3 1-5 0t-5 0z" fill="#fff" />
          <circle cx="11.500" cy="11.500" r="4.500" fill="#d9252b" />
          <path d="M9.500 9.500l4 4M13.500 9.500l-4 4" stroke="#fff" strokeWidth="1.500" />
        </TrayIcon>
      </TrayIcons>
      <Clock>
        16:18
        <br />
        21.12.2017
      </Clock>
      <ShowDesktop aria-label="Arată desktopul" />
      <ClockFrame as="span" />
    </Tray>
  </Taskbar>
);

export default function App() {
  return (
    <>
      <GlobalStyle />
      <Canvas>
        <Screen>
          <BrowserTop />
          <Page />
          <Desktop />
        </Screen>
      </Canvas>
    </>
  );
}
